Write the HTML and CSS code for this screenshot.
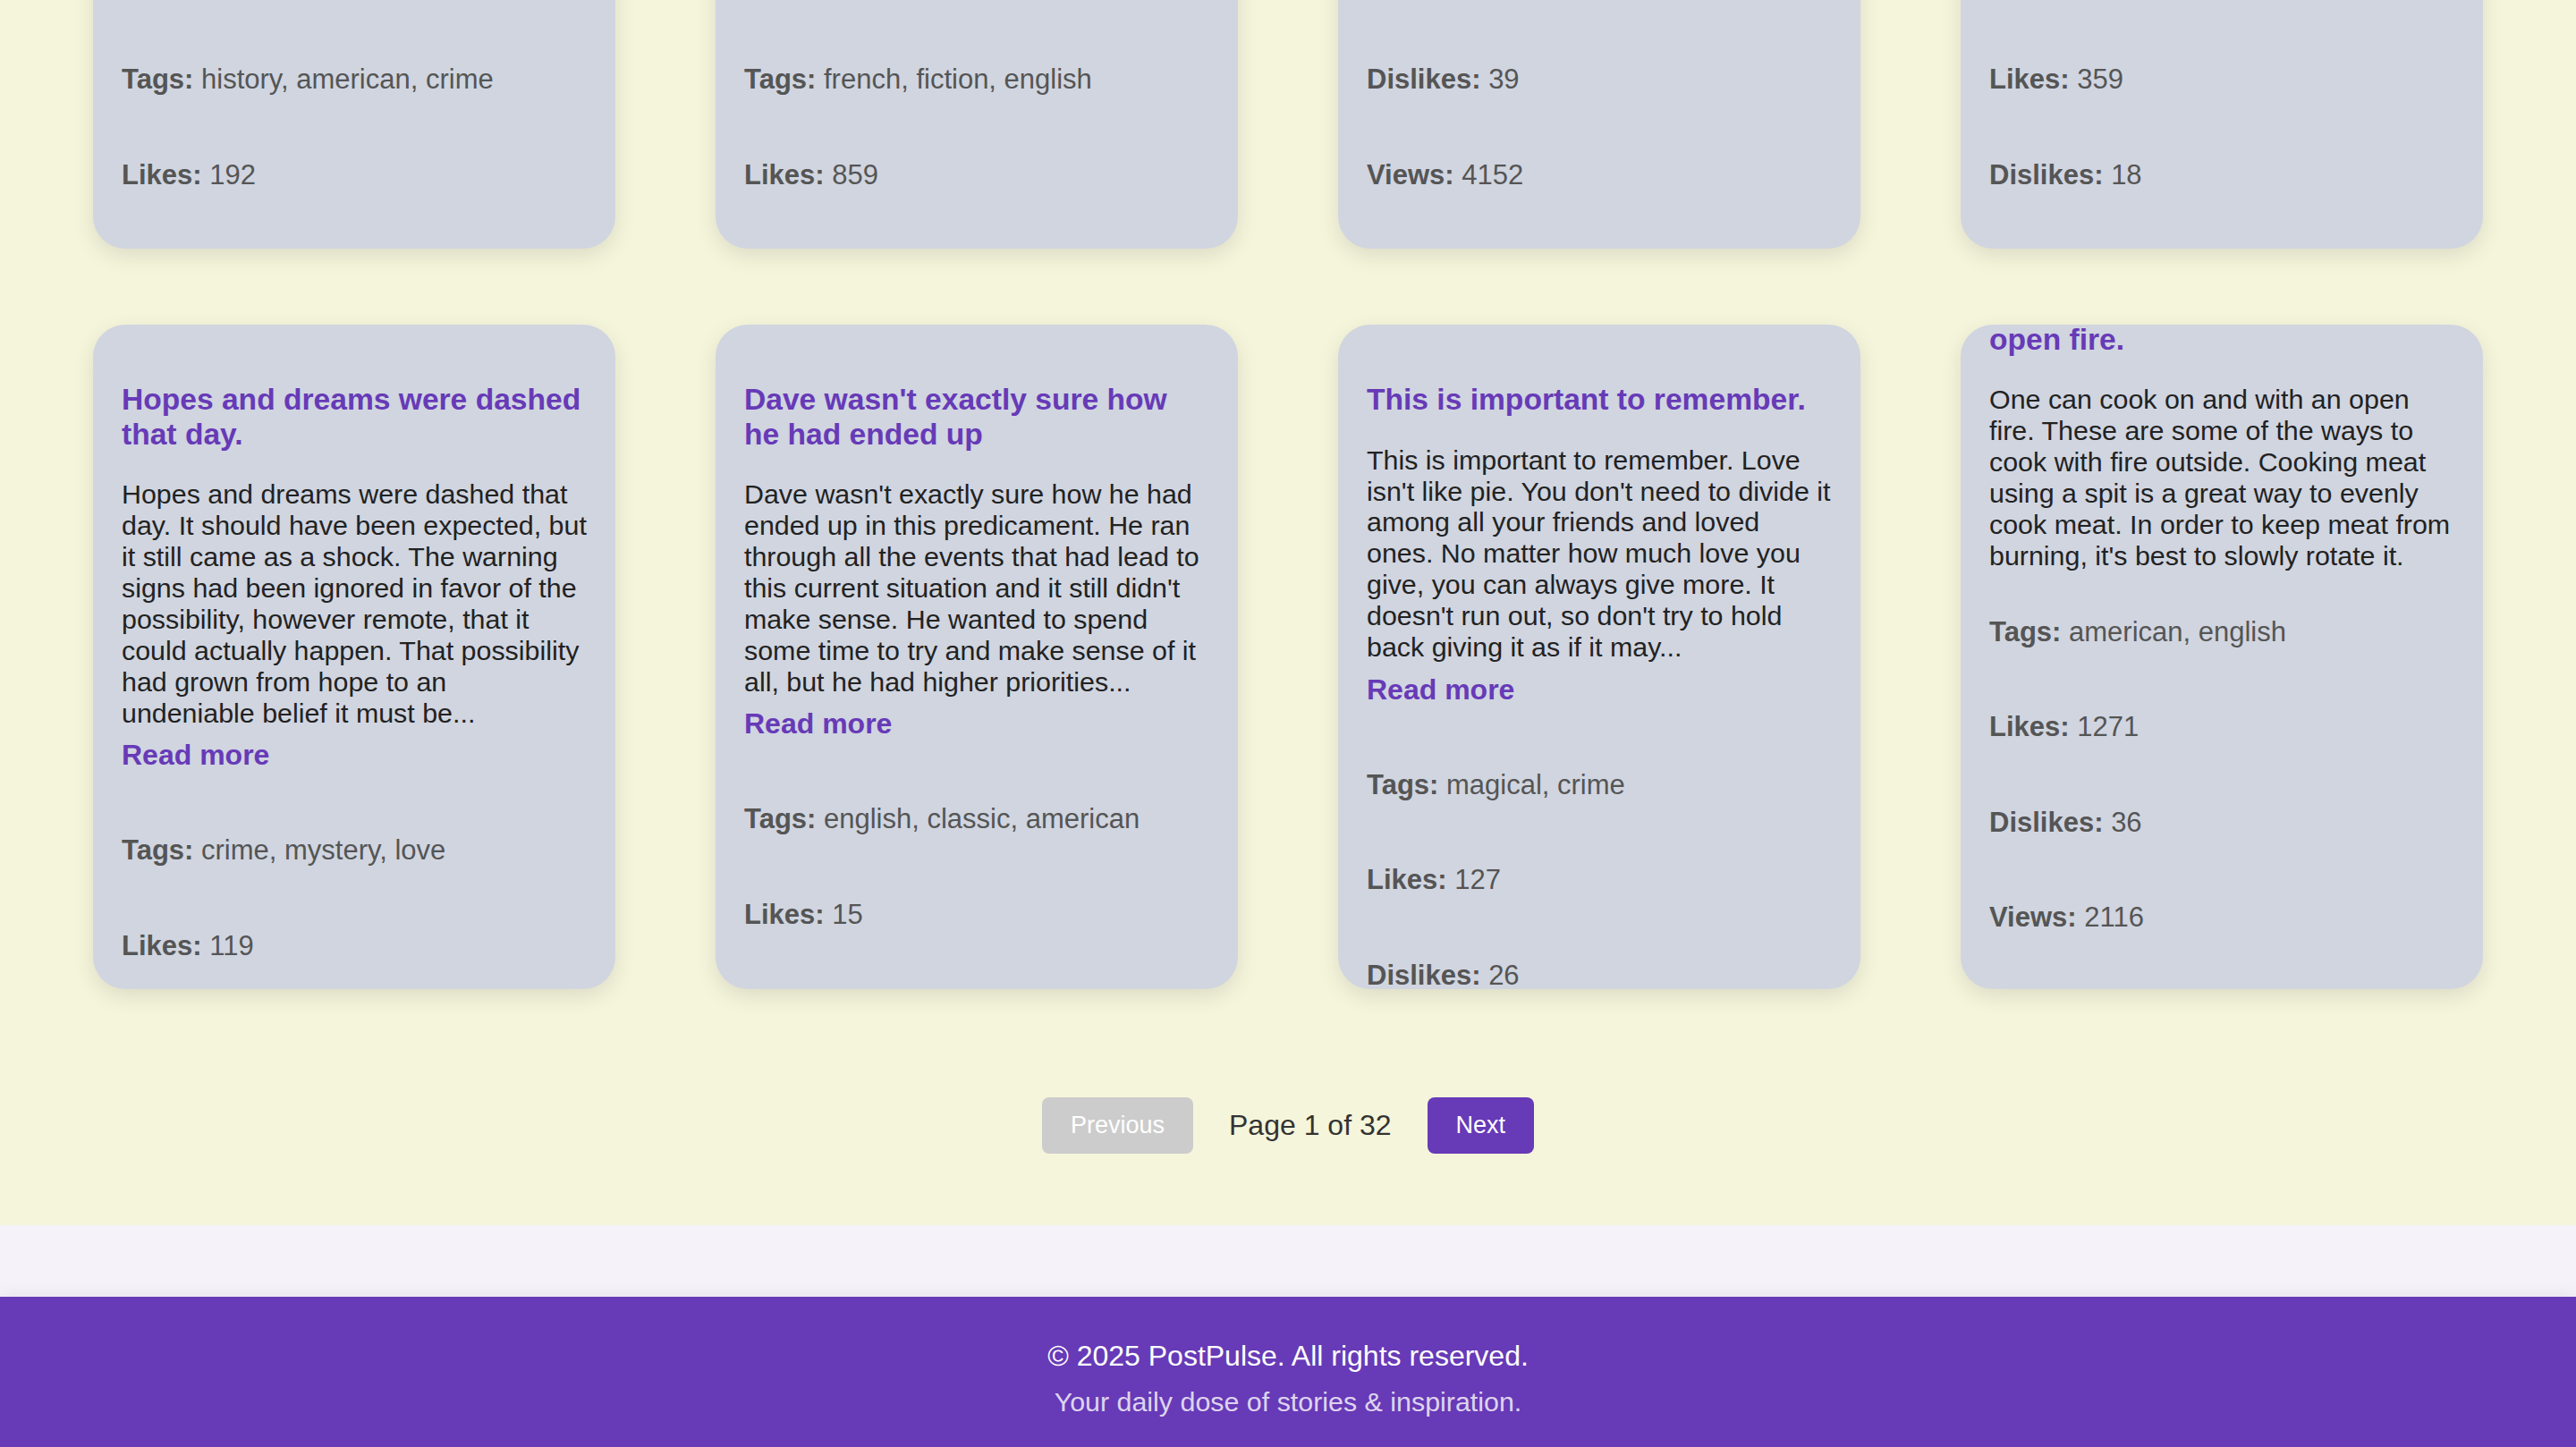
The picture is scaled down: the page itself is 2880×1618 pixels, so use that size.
FILE: index.html
```html
<!DOCTYPE html>
<html lang="en">
<head>
<meta charset="utf-8">
<title>PostPulse</title>
<link rel="stylesheet" href="styles.css">
</head>
<body>
<main class="page">
  <section class="feed">
    <div class="post-grid">
      <article class="post-card post-card--scrolled post-card--peek">
        <h3 class="post-title">His mother had always taught<br>him</h3>
        <p class="post-excerpt">His mother had always taught him not to ever<br>think of himself as better than others. He'd<br>tried to live by this motto. He never looked<br>down on those who were less fortunate or<br>who had less money than him. But the<br>stupidity of the group of people he was<br>talking to made him change his mind...</p>
        <a class="read-more" href="#">Read more</a>
        <div class="post-meta">
          <p><strong>Tags:</strong> history, american, crime</p>
          <p><strong>Likes:</strong> 192</p>
        </div>
      </article>
      <article class="post-card post-card--scrolled post-card--peek">
        <h3 class="post-title">He was an expert but not in a<br>discipline</h3>
        <p class="post-excerpt">He was an expert but not in a discipline that<br>anyone could fully appreciate. He knew how<br>to hold the cone just right so that the soft<br>server ice-cream fell into it at the precise<br>angle to form a perfect cone each and every<br>time. It had taken years to perfect and he<br>could now do it without even putting any...</p>
        <a class="read-more" href="#">Read more</a>
        <div class="post-meta">
          <p><strong>Tags:</strong> french, fiction, english</p>
          <p><strong>Likes:</strong> 859</p>
        </div>
      </article>
      <article class="post-card post-card--scrolled post-card--peek">
        <h3 class="post-title">Dave watched as the forest<br>burned up on the hill.</h3>
        <p class="post-excerpt">Dave watched as the forest burned up on the<br>hill, only a few miles from his house. The car<br>had been hastily packed and Marta was<br>inside trying to round up the last of the pets.<br>Dave went through his mental list of the<br>most important papers and documents...</p>
        <a class="read-more" href="#">Read more</a>
        <div class="post-meta">
          <p><strong>Tags:</strong> magical, history, french</p>
          <p><strong>Likes:</strong> 1448</p>
          <p><strong>Dislikes:</strong> 39</p>
          <p><strong>Views:</strong> 4152</p>
        </div>
      </article>
      <article class="post-card post-card--scrolled post-card--peek">
        <h3 class="post-title">All he wanted was a candy bar.</h3>
        <p class="post-excerpt">All he wanted was a candy bar. It didn't seem<br>like a difficult request to comprehend, but<br>the clerk remained frozen and didn't seem to<br>want to honor the request. It might have had<br>something to do with the gun pointed at his<br>face...</p>
        <a class="read-more" href="#">Read more</a>
        <div class="post-meta">
          <p><strong>Tags:</strong> mystery, english, american</p>
          <p><strong>Likes:</strong> 359</p>
          <p><strong>Dislikes:</strong> 18</p>
        </div>
      </article>

      <article class="post-card">
        <h3 class="post-title">Hopes and dreams were dashed<br>that day.</h3>
        <p class="post-excerpt">Hopes and dreams were dashed that<br>day. It should have been expected, but<br>it still came as a shock. The warning<br>signs had been ignored in favor of the<br>possibility, however remote, that it<br>could actually happen. That possibility<br>had grown from hope to an<br>undeniable belief it must be...</p>
        <a class="read-more" href="#">Read more</a>
        <div class="post-meta">
          <p><strong>Tags:</strong> crime, mystery, love</p>
          <p><strong>Likes:</strong> 119</p>
          <p><strong>Dislikes:</strong> 30</p>
          <p><strong>Views:</strong> 626</p>
        </div>
      </article>
      <article class="post-card">
        <h3 class="post-title">Dave wasn't exactly sure how<br>he had ended up</h3>
        <p class="post-excerpt">Dave wasn't exactly sure how he had<br>ended up in this predicament. He ran<br>through all the events that had lead to<br>this current situation and it still didn't<br>make sense. He wanted to spend<br>some time to try and make sense of it<br>all, but he had higher priorities...</p>
        <a class="read-more" href="#">Read more</a>
        <div class="post-meta">
          <p><strong>Tags:</strong> english, classic, american</p>
          <p><strong>Likes:</strong> 15</p>
          <p><strong>Dislikes:</strong> 8</p>
          <p><strong>Views:</strong> 38</p>
        </div>
      </article>
      <article class="post-card">
        <h3 class="post-title">This is important to remember.</h3>
        <p class="post-excerpt">This is important to remember. Love<br>isn't like pie. You don't need to divide it<br>among all your friends and loved<br>ones. No matter how much love you<br>give, you can always give more. It<br>doesn't run out, so don't try to hold<br>back giving it as if it may...</p>
        <a class="read-more" href="#">Read more</a>
        <div class="post-meta">
          <p><strong>Tags:</strong> magical, crime</p>
          <p><strong>Likes:</strong> 127</p>
          <p><strong>Dislikes:</strong> 26</p>
          <p><strong>Views:</strong> 168</p>
        </div>
      </article>
      <article class="post-card post-card--scrolled">
        <h3 class="post-title">One can cook on and with an<br>open fire.</h3>
        <p class="post-excerpt post-excerpt--full">One can cook on and with an open<br>fire. These are some of the ways to<br>cook with fire outside. Cooking meat<br>using a spit is a great way to evenly<br>cook meat. In order to keep meat from<br>burning, it's best to slowly rotate it.</p>
        <div class="post-meta">
          <p><strong>Tags:</strong> american, english</p>
          <p><strong>Likes:</strong> 1271</p>
          <p><strong>Dislikes:</strong> 36</p>
          <p><strong>Views:</strong> 2116</p>
        </div>
      </article>
    </div>
  </section>

  <nav class="pagination">
    <button class="page-btn page-btn--disabled" disabled>Previous</button>
    <span class="page-info">Page 1 of 32</span>
    <button class="page-btn page-btn--active">Next</button>
  </nav>
</main>

<footer class="site-footer">
  <p class="footer-copy">© 2025 PostPulse. All rights reserved.</p>
  <p class="footer-tagline">Your daily dose of stories &amp; inspiration.</p>
</footer>
</body>
</html>
```

FILE: styles.css
```css
* {
  box-sizing: border-box;
}

html,
body {
  margin: 0;
}

body {
  font-family: "Liberation Sans", Arial, Helvetica, sans-serif;
  background: #f5f3f9;
  color: #333;
}

.page {
  background: #f5f5dc;
  padding-bottom: 80px;
  margin-bottom: 80px;
}

.feed {
  height: 1146px;
  padding: 0 104px 40px;
  display: flex;
  flex-direction: column;
  justify-content: flex-end;
  overflow: hidden;
}

.post-grid {
  flex-shrink: 0;
  display: grid;
  grid-template-columns: repeat(4, 1fr);
  column-gap: 112px;
  row-gap: 84.6px;
}

.post-card {
  height: 743px;
  padding: 32px 26px 32px 32px;
  background: #d0d5e0;
  border-radius: 36px;
  box-shadow: 0 8px 24px rgba(0, 0, 0, 0.1);
  overflow: hidden;
  display: flex;
  flex-direction: column;
  justify-content: flex-start;
}

.post-card--scrolled {
  justify-content: flex-end;
}

.post-card > * {
  flex-shrink: 0;
}

.post-title {
  margin: 33px 0 30px;
  font-size: 33.6px;
  line-height: 38.6px;
  font-weight: 700;
  color: #673ab7;
  white-space: nowrap;
}

.post-excerpt {
  margin: 0 0 11.7px;
  font-size: 30.4px;
  line-height: 34.9px;
  color: #222;
  white-space: nowrap;
}

.post-excerpt--full {
  margin-bottom: 51px;
}

.read-more {
  align-self: flex-start;
  margin-bottom: 71.4px;
  font-size: 32px;
  line-height: 36.8px;
  font-weight: 700;
  color: #673ab7;
  text-decoration: none;
}

.post-meta {
  font-size: 31px;
  line-height: 34.9px;
  color: #555;
}

.post-card--scrolled .post-meta {
  margin-bottom: 30px;
}

.post-card--peek .post-meta {
  margin-bottom: 33px;
}

.post-meta p {
  margin: 0;
}

.post-meta p + p {
  margin-top: 71.6px;
}

.pagination {
  margin-top: 80.7px;
  display: flex;
  justify-content: center;
  align-items: center;
  gap: 40px;
}

.page-btn {
  padding: 16px 32px;
  border: none;
  border-radius: 8px;
  font-family: "Liberation Sans", Arial, Helvetica, sans-serif;
  font-size: 27px;
  line-height: 31px;
  color: #fff;
  cursor: pointer;
}

.page-btn--disabled {
  background: #cccccc;
  cursor: default;
}

.page-btn--active {
  background: #673ab7;
}

.page-info {
  font-size: 32px;
  line-height: 36.8px;
  color: #333;
}

.site-footer {
  background: #673ab7;
  color: #fff;
  text-align: center;
  padding: 32px 0 33px;
  box-shadow: 0 -4px 16px rgba(0, 0, 0, 0.06);
}

.footer-copy {
  margin: 16px 0 15.5px;
  font-size: 32px;
  line-height: 36.8px;
}

.footer-tagline {
  margin: 0;
  font-size: 30.4px;
  line-height: 34.9px;
  color: rgba(255, 255, 255, 0.8);
}
```
